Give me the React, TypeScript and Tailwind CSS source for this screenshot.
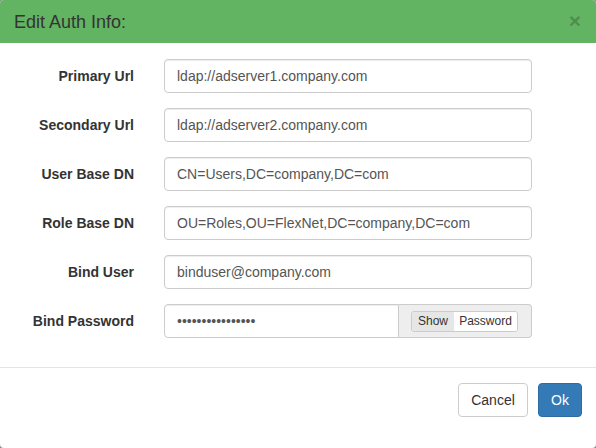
import React, { useState } from 'react';

const fields = [
  { label: 'Primary Url', value: 'ldap://adserver1.company.com' },
  { label: 'Secondary Url', value: 'ldap://adserver2.company.com' },
  { label: 'User Base DN', value: 'CN=Users,DC=company,DC=com' },
  { label: 'Role Base DN', value: 'OU=Roles,OU=FlexNet,DC=company,DC=com' },
  { label: 'Bind User', value: 'binduser@company.com' },
];

export default function App() {
  const [showPassword, setShowPassword] = useState(false);

  return (
    <div className="w-[596px] h-[448px] bg-[#8a8a8a] font-['Liberation_Sans',Arial,sans-serif] text-[#333]">
      <div className="w-full h-full bg-white rounded-[4px] overflow-hidden flex flex-col">
        <div className="h-[43px] bg-[#62b462] flex items-center justify-between pl-[14px] pr-[15px]">
          <h4 className="text-[18px] leading-none text-[#333] mt-[1px]">Edit Auth Info:</h4>
          <button className="text-[21px] font-bold leading-none text-black opacity-20 -mt-[2px]">×</button>
        </div>

        <form className="pt-[16px] pb-[15px] flex flex-col gap-[15px]">
          {fields.map(f => (
            <div key={f.label} className="flex items-center">
              <label className="w-[134px] text-right text-[14px] font-bold">{f.label}</label>
              <div className="ml-[30px] w-[368px]">
                <input
                  readOnly
                  value={f.value}
                  className="w-full h-[34px] px-[12px] border border-[#ccc] rounded-[4px] text-[14px] text-[#555] outline-none shadow-[inset_0_1px_1px_rgba(0,0,0,0.075)]"
                />
              </div>
            </div>
          ))}

          <div className="flex items-center">
            <label className="w-[134px] text-right text-[14px] font-bold">Bind Password</label>
            <div className="ml-[30px] w-[368px] h-[34px] flex">
              <input
                readOnly
                type={showPassword ? 'text' : 'password'}
                value="secretpassword12"
                className="flex-1 min-w-0 h-full px-[12px] border border-[#ccc] rounded-l-[4px] text-[14px] text-[#555] outline-none shadow-[inset_0_1px_1px_rgba(0,0,0,0.075)]"
              />
              <div className="w-[133px] h-full bg-[#eee] border border-l-0 border-[#ccc] rounded-r-[4px] flex items-center pl-[12px]">
                <div className="flex h-[21px] border border-[#ccc] rounded-[3px] overflow-hidden text-[12px]">
                  <button
                    type="button"
                    onClick={() => setShowPassword(true)}
                    className="px-[5px] w-[42px] bg-[#e6e6e6] text-[#333] leading-none"
                  >
                    Show
                  </button>
                  <button
                    type="button"
                    onClick={() => setShowPassword(false)}
                    className="px-[5px] w-[63px] bg-white text-[#333] leading-none"
                  >
                    Password
                  </button>
                </div>
              </div>
            </div>
          </div>
        </form>

        <div className="mt-[14px] border-t border-[#e5e5e5] pt-[15px] pr-[14px] flex justify-end gap-[10px]">
          <button className="h-[34px] w-[70px] border border-[#ccc] rounded-[4px] bg-white text-[14px] text-[#333]">
            Cancel
          </button>
          <button className="h-[34px] w-[44px] border border-[#2e6da4] rounded-[4px] bg-[#337ab7] text-[14px] text-white">
            Ok
          </button>
        </div>
      </div>
    </div>
  );
}
